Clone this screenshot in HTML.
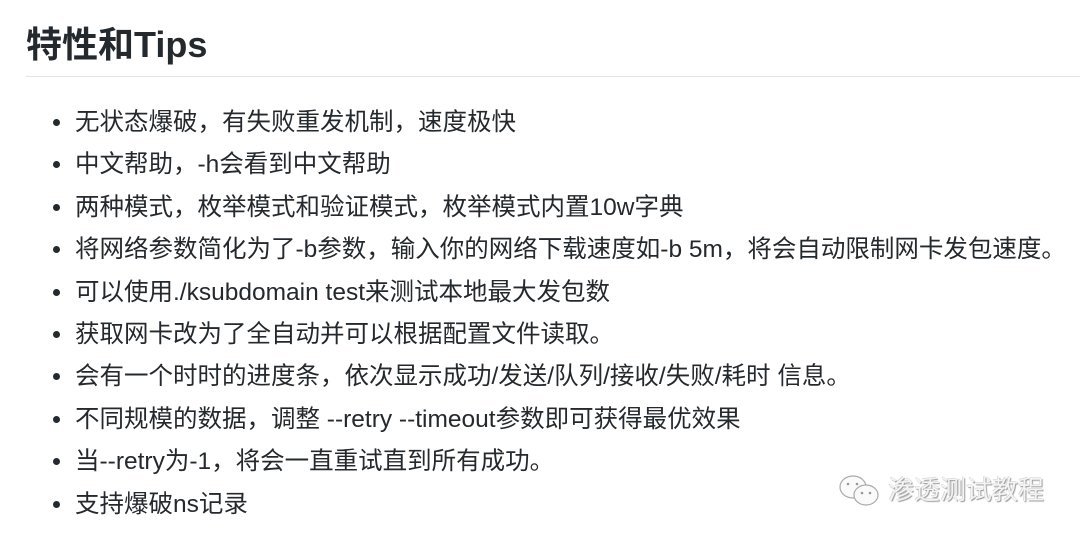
<!DOCTYPE html>
<html><head><meta charset="utf-8"><style>
body{margin:0;width:1080px;height:538px;background:#fff;overflow:hidden;font-family:"Liberation Sans","Noto Sans CJK SC",sans-serif;color:#24292e;position:relative}
h2{position:absolute;left:26px;top:21px;margin:0;font-size:36px;font-weight:bold;line-height:48px}
.rule{position:absolute;left:26px;right:0;top:76px;height:1px;background:#e1e4e8}
ul{position:absolute;left:0;top:102px;margin:0;padding:0;list-style:none}
li{position:relative;padding-left:75px;font-size:24.5px;line-height:42.4px;height:42.4px;white-space:nowrap}
li:before{content:"";position:absolute;left:53px;top:17px;width:7px;height:7px;border-radius:50%;background:#24292e}
.wm{position:absolute;left:838px;top:470px;font-size:26px;color:#f4f4f4;text-shadow:1px 1px 1px #999,-0.5px -0.5px 0 #ccc;line-height:40px}
.wm svg{position:absolute;left:0;top:4px}
.wm span{margin-left:50px}
</style></head><body>
<h2>特性和Tips</h2>
<div class="rule"></div>
<ul>
<li>无状态爆破，有失败重发机制，速度极快</li>
<li>中文帮助，-h会看到中文帮助</li>
<li>两种模式，枚举模式和验证模式，枚举模式内置10w字典</li>
<li>将网络参数简化为了-b参数，输入你的网络下载速度如-b 5m，将会自动限制网卡发包速度。</li>
<li>可以使用./ksubdomain test来测试本地最大发包数</li>
<li>获取网卡改为了全自动并可以根据配置文件读取。</li>
<li>会有一个时时的进度条，依次显示成功/发送/队列/接收/失败/耗时 信息。</li>
<li>不同规模的数据，调整 --retry --timeout参数即可获得最优效果</li>
<li>当--retry为-1，将会一直重试直到所有成功。</li>
<li>支持爆破ns记录</li>
</ul>
<div class="wm"><svg width="44" height="36" viewBox="0 0 44 36"><ellipse cx="15" cy="13" rx="13" ry="11" fill="#fafafa" stroke="#aaa" stroke-width="1.2"/><ellipse cx="28" cy="21" rx="12" ry="10" fill="#fafafa" stroke="#aaa" stroke-width="1.2"/><circle cx="10" cy="10" r="1.3" fill="#999"/><circle cx="19" cy="10" r="1.3" fill="#999"/><circle cx="24" cy="19" r="1.3" fill="#999"/><circle cx="32" cy="19" r="1.3" fill="#999"/></svg><span>渗透测试教程</span></div>
</body></html>
